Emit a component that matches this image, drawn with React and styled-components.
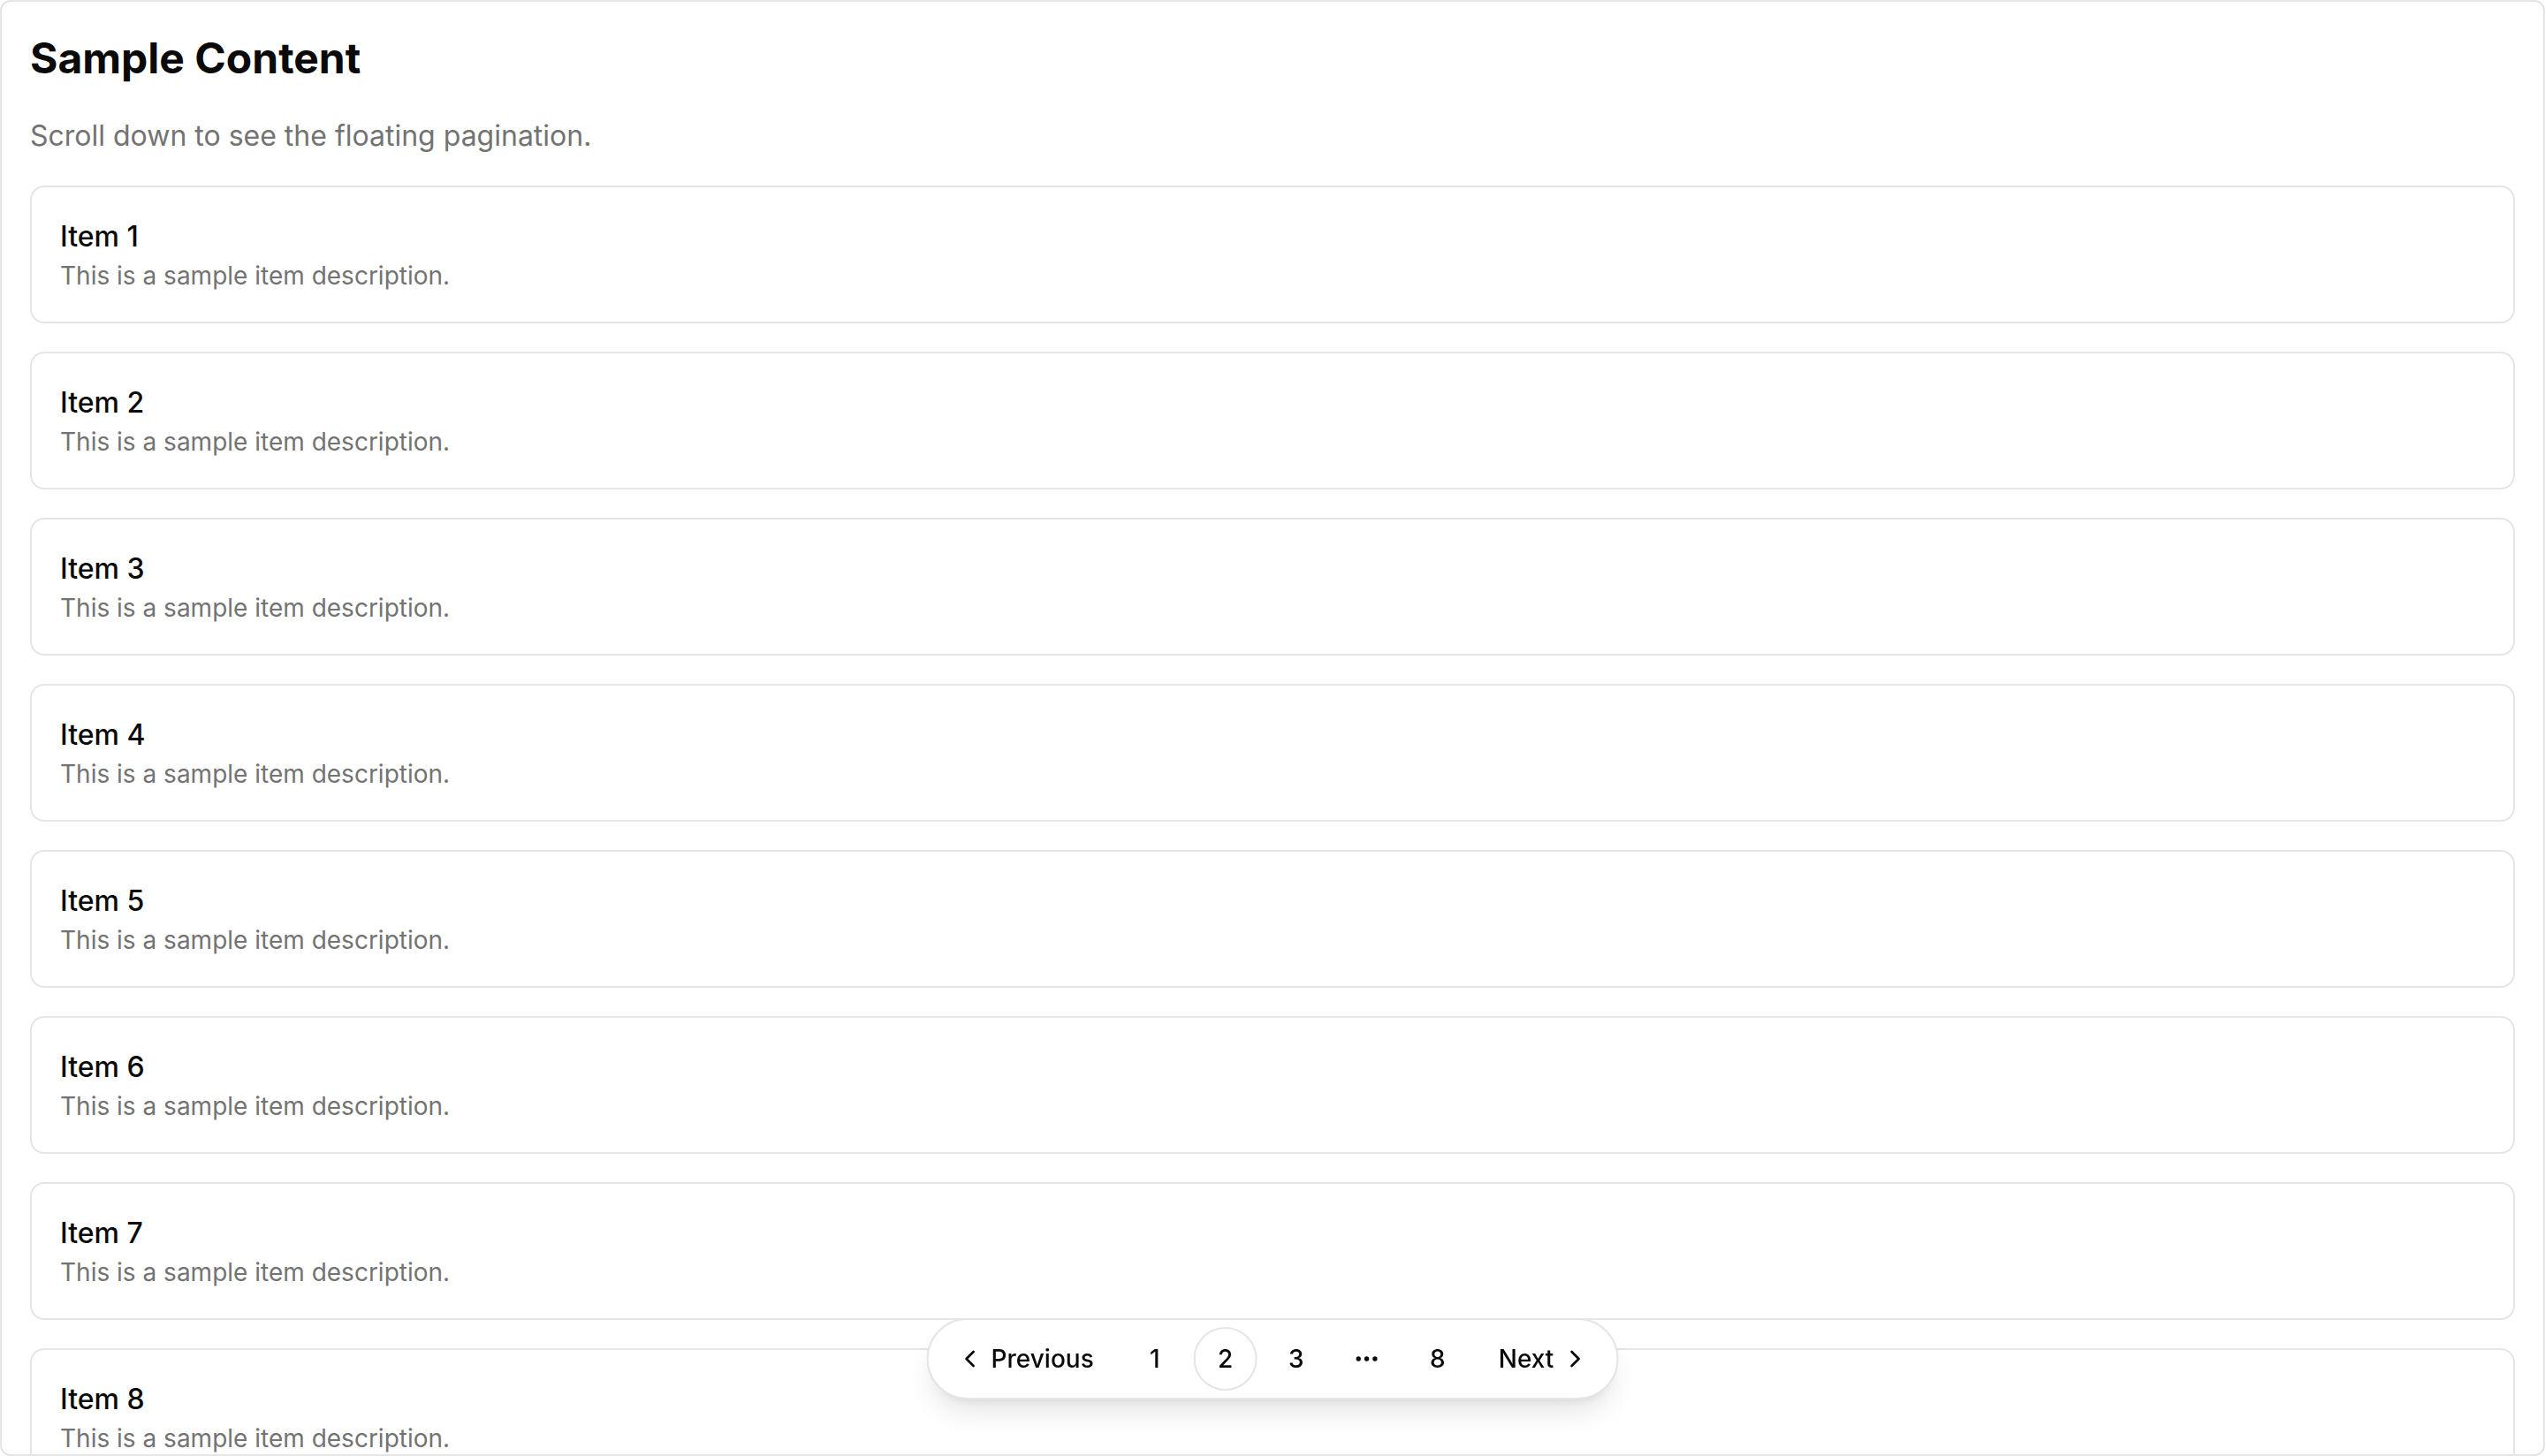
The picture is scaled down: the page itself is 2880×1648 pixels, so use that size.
import React from "react";
import styled, { createGlobalStyle } from "styled-components";
import { ChevronLeft, ChevronRight, MoreHorizontal } from "lucide-react";

const GlobalStyle = createGlobalStyle`
  * { box-sizing: border-box; }
  html, body { margin: 0; padding: 0; background: #fff; }
  body {
    font-family: Inter, "Noto Sans", sans-serif;
    color: #0a0a0a;
    -webkit-font-smoothing: antialiased;
  }
`;

const Frame = styled.div`
  height: 100vh;
  border: 2px solid #e5e5e5;
  border-radius: 12px;
  overflow: hidden;
`;

const Content = styled.div`
  padding: 32px;
`;

const Title = styled.h1`
  margin: 0 0 32px;
  font-size: 48px;
  line-height: 64px;
  font-weight: 700;
`;

const Lead = styled.p`
  margin: 0 0 32px;
  font-size: 32px;
  line-height: 48px;
  color: #737373;
`;

const List = styled.div`
  display: flex;
  flex-direction: column;
  gap: 32px;
`;

const Card = styled.div`
  border: 2px solid #e5e5e5;
  border-radius: 16px;
  padding: 32px;
`;

const CardTitle = styled.div`
  font-size: 32px;
  line-height: 48px;
  font-weight: 500;
`;

const CardText = styled.div`
  font-size: 28px;
  line-height: 40px;
  color: #737373;
`;

const Floating = styled.nav`
  position: fixed;
  left: 50%;
  bottom: 64px;
  transform: translateX(-50%);
  display: flex;
  align-items: center;
  gap: 8px;
  padding: 8px 6px;
  background: #fff;
  border: 2px solid #e5e5e5;
  border-radius: 9999px;
  box-shadow: 0 20px 30px -6px rgb(0 0 0 / 0.1), 0 8px 12px -8px rgb(0 0 0 / 0.1);
`;

const PageButton = styled.button`
  display: inline-flex;
  align-items: center;
  justify-content: center;
  gap: 8px;
  height: 72px;
  min-width: 72px;
  padding: ${(p) => (p.$wide ? "0 23px" : "0")};
  border-radius: 9999px;
  border: 2px solid ${(p) => (p.$active ? "#e5e5e5" : "transparent")};
  background: #fff;
  color: #0a0a0a;
  font-family: inherit;
  font-size: 28px;
  font-weight: 500;
  cursor: pointer;

  svg {
    width: 32px;
    height: 32px;
  }
`;

const items = Array.from({ length: 8 }, (_, i) => i + 1);

export default function App() {
  return (
    <>
      <GlobalStyle />
      <Frame>
        <Content>
          <Title>Sample Content</Title>
          <Lead>Scroll down to see the floating pagination.</Lead>
          <List>
            {items.map((n) => (
              <Card key={n}>
                <CardTitle>Item {n}</CardTitle>
                <CardText>This is a sample item description.</CardText>
              </Card>
            ))}
          </List>
        </Content>
      </Frame>
      <Floating>
        <PageButton $wide>
          <ChevronLeft strokeWidth={2} />
          Previous
        </PageButton>
        <PageButton>1</PageButton>
        <PageButton $active>2</PageButton>
        <PageButton>3</PageButton>
        <PageButton as="span">
          <MoreHorizontal strokeWidth={2} />
        </PageButton>
        <PageButton>8</PageButton>
        <PageButton $wide>
          Next
          <ChevronRight strokeWidth={2} />
        </PageButton>
      </Floating>
    </>
  );
}
